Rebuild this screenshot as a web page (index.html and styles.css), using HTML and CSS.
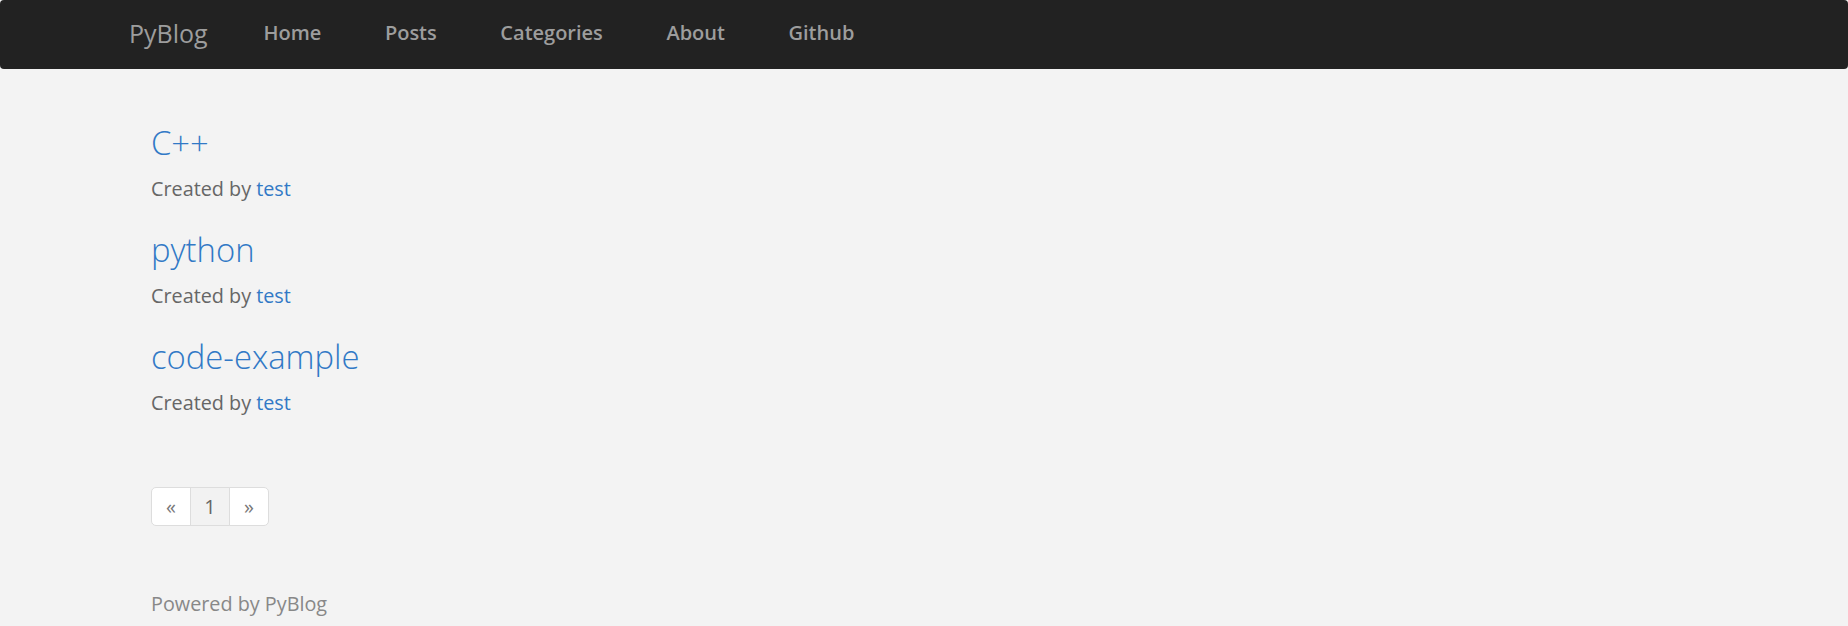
FILE: index.html
```html
<!DOCTYPE html>
<html lang="en">
<head>
<meta charset="utf-8">
<title>PyBlog</title>
<link rel="stylesheet" href="styles.css">
</head>
<body>
<nav class="navbar">
  <a class="brand" href="#">PyBlog</a>
  <ul class="nav">
    <li><a href="#">Home</a></li>
    <li><a href="#">Posts</a></li>
    <li><a href="#">Categories</a></li>
    <li><a href="#">About</a></li>
    <li><a href="#">Github</a></li>
  </ul>
</nav>
<main class="main">
  <article class="entry">
    <h2 class="entry-title"><a href="#">C++</a></h2>
    <p class="entry-meta">Created by <a href="#">test</a></p>
  </article>
  <article class="entry">
    <h2 class="entry-title"><a href="#">python</a></h2>
    <p class="entry-meta">Created by <a href="#">test</a></p>
  </article>
  <article class="entry">
    <h2 class="entry-title"><a href="#">code-example</a></h2>
    <p class="entry-meta">Created by <a href="#">test</a></p>
  </article>
  <ul class="pagination">
    <li><a href="#">&laquo;</a></li>
    <li class="active"><a href="#">1</a></li>
    <li><a href="#">&raquo;</a></li>
  </ul>
  <footer class="footer">Powered by PyBlog</footer>
</main>
</body>
</html>
```
FILE: styles.css
```css
html, body {
  margin: 0;
  padding: 0;
}
body {
  background: #f3f3f3;
  font-family: "Open Sans", "Liberation Sans", sans-serif;
  font-size: 19.8px;
  line-height: 28px;
  color: #666666;
}
a {
  text-decoration: none;
}
.navbar {
  display: flex;
  align-items: flex-start;
  height: 69px;
  box-sizing: border-box;
  background: #222222;
  border-radius: 4px;
  padding-left: 129px;
}
.brand {
  display: block;
  font-size: 25px;
  line-height: 25px;
  padding-top: 20.5px;
  margin-right: 24px;
  color: #9d9d9d;
}
.nav {
  display: flex;
  list-style: none;
  margin: 0;
  padding: 0;
}
.nav a {
  display: block;
  padding: 23px 31.8px 0;
  font-size: 20px;
  line-height: 20px;
  font-weight: 600;
  color: #9d9d9d;
}
.main {
  padding: 55.5px 0 0 151px;
}
.entry-title {
  margin: 0 0 14.5px;
  font-size: 32.8px;
  line-height: 36px;
  font-weight: 300;
}
.entry-title a,
.entry-meta a {
  color: #3179c6;
}
.entry-meta {
  margin: 0 0 28.5px;
}
.pagination {
  display: flex;
  list-style: none;
  margin: 69.5px 0 0;
  padding: 0;
  font-size: 20px;
}
.pagination a {
  display: flex;
  justify-content: center;
  width: 38px;
  height: 37.5px;
  line-height: 37.5px;
  border: 1px solid #dddddd;
  margin-left: -1px;
  background: #ffffff;
  color: #777777;
}
.pagination li:first-child a {
  margin-left: 0;
  border-radius: 5px 0 0 5px;
}
.pagination li:last-child a {
  border-radius: 0 5px 5px 0;
}
.pagination .active a {
  background: #f2f2f2;
  color: #666666;
}
.footer {
  margin-top: 63.5px;
  color: #888888;
}
```
